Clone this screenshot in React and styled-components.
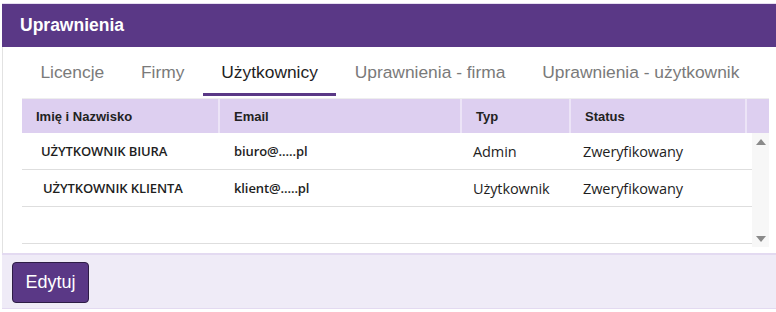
import styled, { createGlobalStyle } from 'styled-components';

const GlobalStyle = createGlobalStyle`
	body {
		margin: 0;
		background: #ffffff;
		font-family: 'Liberation Sans', Arial, sans-serif;
	}
`;

// styles
const Panel = styled.div`
	margin: 3px 0 0 2px;
	border-top: 1px solid #e6def0;
	border-left: 1px solid #e2e2e2;
	width: 774px;
	box-sizing: border-box;
`;

const Header = styled.div`
	height: 43px;
	background: #5a3886;
	color: #ffffff;
	display: flex;
	align-items: center;
	padding-left: 18px;
	margin-left: -1px;
	font-size: 17.5px;
	font-weight: bold;
`;

const Body = styled.div`
	padding: 0 0 6px 19px;
`;

const Tabs = styled.div`
	display: flex;
	height: 49px;
	margin-bottom: 2px;
`;

const Tab = styled.div`
	display: flex;
	align-items: center;
	padding: 4px 18.4px 0;
	font-size: 17.4px;
	color: ${(props) => (props.active ? '#1f1f1f' : '#7a7a7a')};
	border-bottom: 3px solid
		${(props) => (props.active ? '#5a3886' : 'transparent')};
`;

const Table = styled.div`
	width: 747px;
	border-top: 1px solid #eeeeee;
`;

const HeadRow = styled.div`
	display: grid;
	grid-template-columns: 198px 242px 109px 176px 22px;
	height: 34px;
	background: #ddcff0;
`;

const HeadCell = styled.div`
	display: flex;
	align-items: center;
	padding-left: 14px;
	font-size: 13px;
	font-weight: bold;
	color: #222;
	border-right: ${(props) => (props.last ? 'none' : '2px solid #ece4f7')};
	box-sizing: border-box;
`;

const Scroller = styled.div`
	display: flex;
`;

const Rows = styled.div`
	width: 730px;
`;

const Row = styled.div`
	display: grid;
	grid-template-columns: 198px 242px 109px 181px;
	height: 36px;
	border-bottom: 1px solid #dedede;
	font-family: 'Open Sans', 'Noto Sans', sans-serif;
	color: #1e1e1e;
`;

const Cell = styled.div`
	display: flex;
	align-items: center;
	padding-left: ${(props) => props.pad || 14}px;
	font-size: ${(props) => (props.bold ? '13px' : '14.5px')};
	font-weight: ${(props) => (props.bold ? 600 : 400)};
	letter-spacing: -0.1px;
	white-space: nowrap;
`;

const ScrollBar = styled.div`
	width: 17px;
	height: 114px;
	background: #f7f7f7;
	display: flex;
	flex-direction: column;
	justify-content: space-between;
	align-items: center;
	padding: 6px 0 5px;
	box-sizing: border-box;
`;

const Arrow = styled.div`
	width: 0;
	height: 0;
	border-left: 5px solid transparent;
	border-right: 5px solid transparent;
	${(props) =>
		props.down
			? 'border-top: 6px solid #8a8a8a;'
			: 'border-bottom: 6px solid #8a8a8a;'}
`;

const Footer = styled.div`
	height: 56px;
	background: #efebf7;
	border-top: 2px solid #e3daf1;
	border-bottom: 1px solid #e3daf1;
	margin-left: -1px;
	padding-left: 10px;
	display: flex;
	align-items: center;
	box-sizing: border-box;
`;

const Button = styled.button`
	width: 77px;
	height: 41px;
	background: #5a3886;
	border: 1px solid #2d1c45;
	border-radius: 4px;
	color: #ffffff;
	font-family: 'Liberation Sans', Arial, sans-serif;
	font-size: 18px;
	padding: 0;
	margin-top: 1px;
`;

const tabs = [
	'Licencje',
	'Firmy',
	'Użytkownicy',
	'Uprawnienia - firma',
	'Uprawnienia - użytkownik',
];

const users = [
	{ name: 'UŻYTKOWNIK BIURA', pad: 19, email: 'biuro@.....pl', type: 'Admin' },
	{ name: 'UŻYTKOWNIK KLIENTA', pad: 21, email: 'klient@.....pl', type: 'Użytkownik' },
];

const App = () => {
	return (
		<>
			<GlobalStyle />
			<Panel>
				<Header>Uprawnienia</Header>
				<Body>
					<Tabs>
						{tabs.map((tab) => (
							<Tab key={tab} active={tab === 'Użytkownicy'}>
								{tab}
							</Tab>
						))}
					</Tabs>
					<Table>
						<HeadRow>
							<HeadCell>Imię i Nazwisko</HeadCell>
							<HeadCell>Email</HeadCell>
							<HeadCell>Typ</HeadCell>
							<HeadCell>Status</HeadCell>
							<HeadCell last />
						</HeadRow>
						<Scroller>
							<Rows>
								{users.map((user) => (
									<Row key={user.email}>
										<Cell bold pad={user.pad}>
											{user.name}
										</Cell>
										<Cell bold>{user.email}</Cell>
										<Cell pad={11}>{user.type}</Cell>
										<Cell pad={12}>Zweryfikowany</Cell>
									</Row>
								))}
								<Row />
							</Rows>
							<ScrollBar>
								<Arrow />
								<Arrow down />
							</ScrollBar>
						</Scroller>
					</Table>
				</Body>
				<Footer>
					<Button>Edytuj</Button>
				</Footer>
			</Panel>
		</>
	);
};

export default App;
